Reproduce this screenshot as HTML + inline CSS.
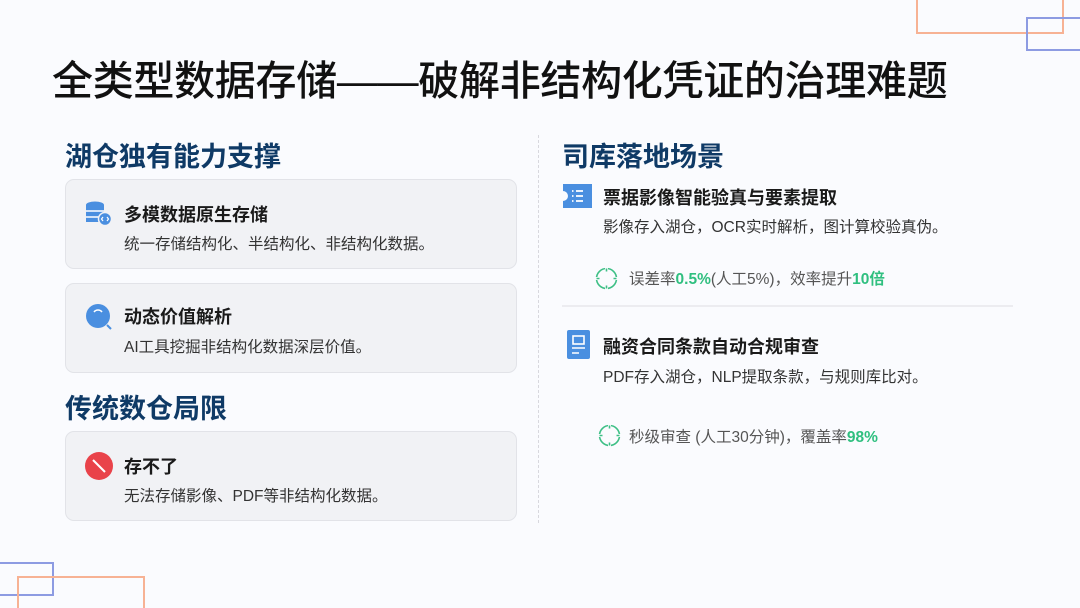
<!DOCTYPE html>
<html><head><meta charset="utf-8"><style>
html,body{margin:0;width:1080px;height:608px;overflow:hidden}
body{background:#fafbfe;position:relative;font-family:"Liberation Sans","Noto Sans CJK SC",sans-serif;color:#222}
.a{position:absolute}
.r{position:absolute;border:2px solid}
h1{position:absolute;left:52px;top:47px;margin:0;font-size:41px;font-weight:500;color:#111;letter-spacing:-0.3px;white-space:nowrap}
.h{position:absolute;font-size:27px;font-weight:700;color:#0f3a66;margin:0;white-space:nowrap}
.card{position:absolute;left:65px;width:450px;height:88px;background:#f1f2f5;border:1.5px solid #e2e3e8;border-radius:9px}
.t{position:absolute;font-size:18px;font-weight:700;color:#1a1a1a;white-space:nowrap}
.d{position:absolute;font-size:15.5px;color:#333;white-space:nowrap}
.m{position:absolute;font-size:15.5px;color:#555;white-space:nowrap}
.g{color:#2fbf7f;font-weight:700}
</style></head><body>
<div class="r" style="left:916px;top:-4px;width:144px;height:34px;border-color:#f7b294"></div>
<div class="r" style="left:1026px;top:17px;width:70px;height:30px;border-color:#8d9be2"></div>
<div class="r" style="left:-10px;top:562px;width:60px;height:30px;border-color:#8d9be2"></div>
<div class="r" style="left:17px;top:576px;width:124px;height:40px;border-color:#f7b294"></div>

<h1>全类型数据存储——破解非结构化凭证的治理难题</h1>

<div class="h" style="left:65px;top:135px">湖仓独有能力支撑</div>
<div class="card" style="top:179px"></div>
<svg class="a" style="left:85px;top:201px" width="28" height="26" viewBox="0 0 28 26"><ellipse cx="10" cy="4" rx="9" ry="3.5" fill="#4a8fe0"/><rect x="1" y="4" width="18" height="17" fill="#4a8fe0"/><path d="M1 10h18M1 16h18" stroke="#fff" stroke-width="1.5"/><circle cx="20" cy="18" r="6.5" fill="#4a8fe0" stroke="#f1f2f5" stroke-width="1.5"/><path d="M18 16l-1.5 2 1.5 2M22 16l1.5 2-1.5 2" stroke="#fff" stroke-width="1.2" fill="none"/></svg>
<div class="t" style="left:124px;top:201px">多模数据原生存储</div>
<div class="d" style="left:124px;top:232px">统一存储结构化、半结构化、非结构化数据。</div>

<div class="card" style="top:283px"></div>
<svg class="a" style="left:85px;top:303px" width="28" height="28" viewBox="0 0 28 28"><circle cx="13" cy="13" r="12" fill="#4a8fe0"/><path d="M9 9a5 5 0 0 1 8 0" stroke="#fff" stroke-width="1.5" fill="none"/><path d="M22 22l4 4" stroke="#4a8fe0" stroke-width="2"/></svg>
<div class="t" style="left:124px;top:303px">动态价值解析</div>
<div class="d" style="left:124px;top:335px">AI工具挖掘非结构化数据深层价值。</div>

<div class="h" style="left:65px;top:387px">传统数仓局限</div>
<div class="card" style="top:431px"></div>
<svg class="a" style="left:85px;top:452px" width="28" height="28" viewBox="0 0 28 28"><circle cx="14" cy="14" r="14" fill="#e9434a"/><path d="M8 8l12 12" stroke="#fff" stroke-width="2"/></svg>
<div class="t" style="left:124px;top:453px">存不了</div>
<div class="d" style="left:124px;top:484px">无法存储影像、PDF等非结构化数据。</div>

<div class="a" style="left:538px;top:135px;height:388px;border-left:1.5px dashed #d8d8de"></div>

<div class="h" style="left:562px;top:135px">司库落地场景</div>
<svg class="a" style="left:563px;top:184px" width="29" height="24" viewBox="0 0 29 24"><path d="M0 0h29v24H0v-7a5 5 0 0 0 0-10z" fill="#4a8fe0"/><path d="M9 7h1.5M9 12h1.5M9 17h1.5M13 7h7M13 12h7M13 17h7" stroke="#fff" stroke-width="1.8"/></svg>
<div class="t" style="left:603px;top:184px">票据影像智能验真与要素提取</div>
<div class="d" style="left:603px;top:215px">影像存入湖仓，OCR实时解析，图计算校验真伪。</div>
<svg class="a" style="left:595px;top:267px" width="23" height="23" viewBox="0 0 23 23" fill="none" stroke="#3dbf85" stroke-width="1.6"><circle cx="11.5" cy="11.5" r="10"/><path d="M11.5 0v4M11.5 19v4M0 11.5h4M19 11.5h4" stroke="#fafbfe" stroke-width="3"/><path d="M11.5 1.5v3M11.5 18.5v3M1.5 11.5h3M18.5 11.5h3"/></svg>
<div class="m" style="left:629px;top:267px">误差率<span class="g">0.5%</span>(人工5%)，效率提升<span class="g">10倍</span></div>
<div class="a" style="left:562px;top:305px;width:451px;height:1.5px;background:#ececf0"></div>

<svg class="a" style="left:567px;top:330px" width="23" height="29" viewBox="0 0 23 29"><rect width="23" height="29" rx="2" fill="#4a8fe0"/><rect x="6" y="6" width="11" height="8" fill="none" stroke="#fff" stroke-width="1.6"/><path d="M5 18h13M5 23h7" stroke="#fff" stroke-width="1.6"/></svg>
<div class="t" style="left:603px;top:333px">融资合同条款自动合规审查</div>
<div class="d" style="left:603px;top:365px">PDF存入湖仓，NLP提取条款，与规则库比对。</div>
<svg class="a" style="left:598px;top:424px" width="23" height="23" viewBox="0 0 23 23" fill="none" stroke="#3dbf85" stroke-width="1.6"><circle cx="11.5" cy="11.5" r="10"/><path d="M11.5 0v4M11.5 19v4M0 11.5h4M19 11.5h4" stroke="#fafbfe" stroke-width="3"/><path d="M11.5 1.5v3M11.5 18.5v3M1.5 11.5h3M18.5 11.5h3"/></svg>
<div class="m" style="left:629px;top:425px">秒级审查 (人工30分钟)，覆盖率<span class="g">98%</span></div>
</body></html>
